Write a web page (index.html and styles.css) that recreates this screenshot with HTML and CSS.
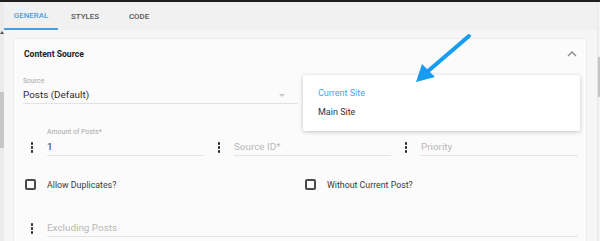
FILE: index.html
```html
<!DOCTYPE html>
<html lang="en">
<head>
    <meta charset="UTF-8">
    <title>Content Source</title>
    <link rel="stylesheet" href="styles.css">
</head>
<body>
    <div class="topline"></div>
    <div class="app">
        <div class="leftbar">
            <span class="scroll-up"></span>
            <span class="scroll-thumb"></span>
        </div>
        <div class="main">
            <div class="tabs">
                <div class="tab active">GENERAL</div>
                <div class="tab">STYLES</div>
                <div class="tab">CODE</div>
            </div>
            <div class="content">
                <div class="card">
                    <div class="card-header">
                        <span class="card-title">Content Source</span>
                        <svg class="chevron" width="10" height="6" viewBox="0 0 10 6"><path d="M1 5 L5 1 L9 5" fill="none" stroke="#8a8a8a" stroke-width="1.4"/></svg>
                    </div>
                    <div class="card-body">
                        <div class="row halves">
                            <div class="field select">
                                <div class="label">Source</div>
                                <div class="value">Posts (Default) <span class="caret"></span></div>
                            </div>
                            <div class="field select-site">
                                <div class="menu">
                                    <div class="menu-item selected">Current Site</div>
                                    <div class="menu-item">Main Site</div>
                                </div>
                            </div>
                        </div>
                        <div class="row thirds">
                            <div class="col">
                                <span class="kebab"><i></i><i></i><i></i></span>
                                <div class="field">
                                    <div class="label">Amount of Posts*</div>
                                    <div class="value">1</div>
                                </div>
                            </div>
                            <div class="col">
                                <span class="kebab"><i></i><i></i><i></i></span>
                                <div class="field">
                                    <div class="label"></div>
                                    <div class="value placeholder">Source ID*</div>
                                </div>
                            </div>
                            <div class="col">
                                <span class="kebab"><i></i><i></i><i></i></span>
                                <div class="field">
                                    <div class="label"></div>
                                    <div class="value placeholder">Priority</div>
                                </div>
                            </div>
                        </div>
                        <div class="row halves checks">
                            <label class="check"><span class="box"></span>Allow Duplicates?</label>
                            <label class="check"><span class="box"></span>Without Current Post?</label>
                        </div>
                        <div class="row single">
                            <span class="kebab"><i></i><i></i><i></i></span>
                            <div class="field">
                                <div class="value placeholder">Excluding Posts</div>
                            </div>
                        </div>
                    </div>
                </div>
            </div>
        </div>
        <div class="rightbar">
            <span class="scroll-thumb"></span>
        </div>
    </div>
    <svg class="pointer" width="600" height="241" viewBox="0 0 600 241">
        <line x1="469" y1="36" x2="427" y2="72" stroke="#169cf2" stroke-width="4" stroke-linecap="round"/>
        <polygon points="416,82 422,64 435,77" fill="#169cf2"/>
    </svg>
</body>
</html>
```
FILE: styles.css
```css
body {
    margin: 0;
    font-family: Roboto, "Liberation Sans", sans-serif;
    background: #f5f5f5;
    color: #333;
    height: 241px;
    overflow: hidden;
}
.topline {
    height: 2px;
    background: #1f1f1f;
}
.app {
    display: flex;
    height: 239px;
}
.leftbar {
    width: 4px;
    background: #ebebeb;
    position: relative;
}
.scroll-up {
    position: absolute;
    top: 29px;
    left: 0;
    border-left: 2px solid transparent;
    border-right: 2px solid transparent;
    border-bottom: 3px solid #555;
}
.leftbar .scroll-thumb {
    position: absolute;
    top: 90px;
    left: 0;
    width: 4px;
    height: 56px;
    background: #c6c6c6;
}
.main {
    flex: 1;
    display: flex;
    flex-direction: column;
}
.tabs {
    display: flex;
    height: 28px;
    background: #f1f1f1;
}
.tab {
    width: 54px;
    display: flex;
    align-items: center;
    justify-content: center;
    font-size: 7.9px;
    font-weight: 500;
    color: #555;
    box-sizing: border-box;
    padding-top: 1px;
}
.tab.active {
    color: #4a9de0;
    border-bottom: 2px solid #4a9de0;
}
.content {
    flex: 1;
    padding: 8px 10px 0 9px;
    background: #f6f6f6;
}
.card {
    background: #fbfbfb;
    border: 1px solid #ececec;
    border-bottom: none;
    height: 100%;
    box-sizing: border-box;
}
.card-header {
    display: flex;
    align-items: center;
    justify-content: space-between;
    height: 30px;
    padding: 0 9px 0 10px;
}
.card-title {
    font-size: 8.6px;
    font-weight: 700;
    color: #222;
}
.card-body {
    padding: 0 8px 0 9px;
}
.row {
    display: grid;
}
.halves {
    grid-template-columns: 1fr 1fr;
    column-gap: 5px;
}
.thirds {
    grid-template-columns: 1fr 1fr 1fr;
    column-gap: 6px;
    margin-top: 23px;
}
.col {
    display: flex;
    align-items: flex-end;
}
.kebab {
    width: 18px;
    margin-right: 6px;
    display: flex;
    flex-direction: column;
    align-items: center;
    gap: 1.2px;
    padding-bottom: 3.5px;
}
.kebab i {
    width: 2.8px;
    height: 2.8px;
    border-radius: 50%;
    background: #222;
}
.field {
    flex: 1;
    border-bottom: 1px solid #e3e3e3;
}
.label {
    font-size: 6.9px;
    color: #a9a9a9;
    height: 10px;
    line-height: 10px;
    margin-bottom: 3px;
}
.halves .label {
    margin-bottom: 2px;
}
.value {
    font-size: 9.9px;
    line-height: 14px;
    height: 14px;
    padding-bottom: 1px;
    color: #2b2b2b;
    position: relative;
}
.value.placeholder {
    color: #b8b8b8;
}
.halves .field {
    margin-top: 7px;
}
.caret {
    position: absolute;
    right: 13px;
    top: 6px;
    border-left: 3px solid transparent;
    border-right: 3px solid transparent;
    border-top: 3px solid #c8c8c8;
}
.select-site {
    border-bottom: none;
    position: relative;
}
.menu {
    position: absolute;
    top: -1px;
    left: 0;
    width: 277px;
    height: 56px;
    background: #fff;
    box-shadow: 0 1px 4px rgba(0, 0, 0, 0.22);
    border-radius: 2px;
    padding-top: 8.5px;
    box-sizing: border-box;
}
.menu-item {
    font-size: 9px;
    line-height: 19px;
    padding-left: 15px;
    color: #333;
}
.menu-item.selected {
    color: #42a5f5;
}
.checks {
    margin-top: 22px;
}
.check {
    display: flex;
    align-items: center;
    font-size: 8.8px;
    color: #3a3a3a;
    height: 13px;
}
.box {
    width: 7px;
    height: 7px;
    border: 2px solid #4a4a4a;
    border-radius: 2px;
    margin: 0 11px 0 2px;
}
.single {
    display: flex;
    align-items: flex-end;
    margin-top: 30px;
}
.rightbar {
    width: 2px;
    background: #f3f3f3;
    border-left: 1px solid #e6e6e6;
    position: relative;
}
.rightbar .scroll-thumb {
    position: absolute;
    top: 55px;
    left: 0;
    width: 2px;
    height: 40px;
    background: #c4c4c4;
}
.pointer {
    position: absolute;
    top: 0;
    left: 0;
    pointer-events: none;
}
```
